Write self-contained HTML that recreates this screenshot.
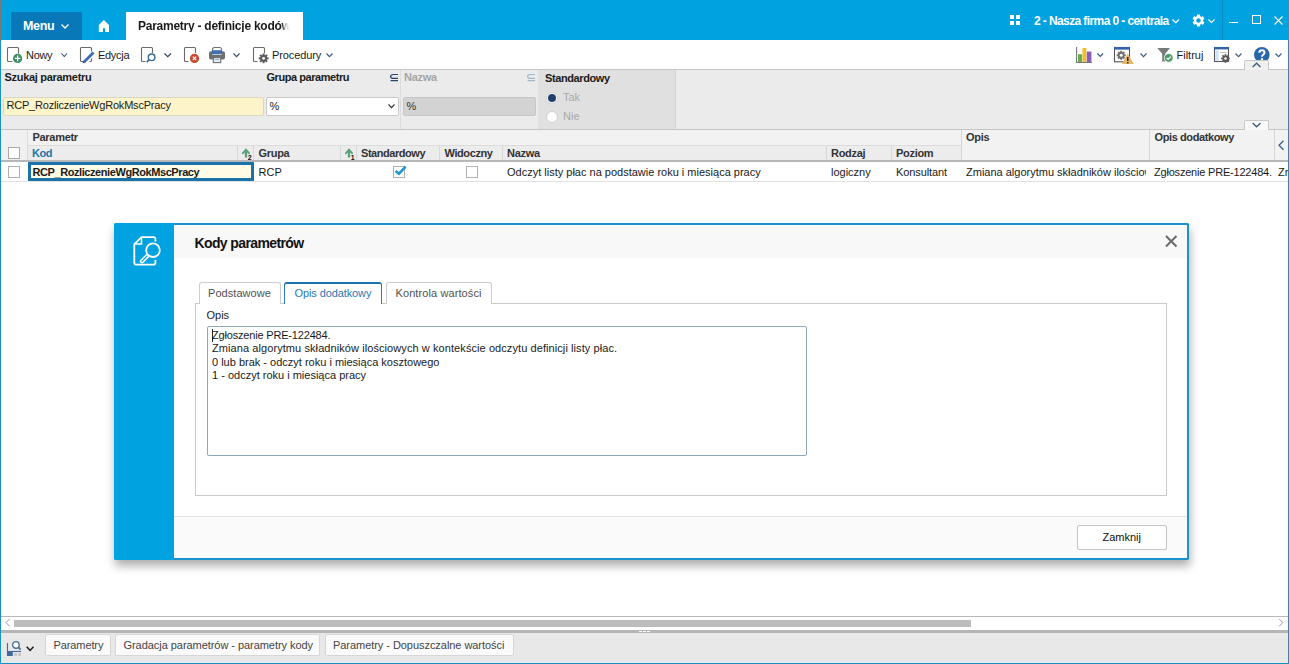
<!DOCTYPE html>
<html><head><meta charset="utf-8">
<style>
*{box-sizing:border-box;margin:0;padding:0}
html,body{width:1289px;height:664px;overflow:hidden;background:#fff;font-family:"Liberation Sans",sans-serif;font-size:11px;color:#1a1a1a}
.a{position:absolute}
.t{position:absolute;white-space:nowrap;line-height:1}
.b{font-weight:700}
svg{position:absolute;overflow:visible}
</style></head>
<body>
<!-- TOP BAR -->
<div class="a" style="left:0;top:0;width:1289px;height:40px;background:#00a3e0"></div>
<div class="a" style="left:0;top:0;width:1px;height:40px;background:#7a7a7a"></div>
<div class="a" style="left:11px;top:12px;width:71px;height:28px;background:#0878b9"></div>
<div class="t b" style="left:23px;top:20px;font-size:12.5px;color:#fff;letter-spacing:-0.3px">Menu</div>
<svg style="left:61px;top:24px" width="8" height="5"><path d="M0.5 0.5 L4 4 L7.5 0.5" fill="none" stroke="#fff" stroke-width="1.3"/></svg>
<svg style="left:98px;top:19px" width="13" height="14"><path d="M0.8 6 L5.9 0.9 L11 6 V13 H7.1 V9.2 H4.9 V13 H0.8 Z" fill="#fff"/></svg>
<div class="a" style="left:126px;top:12px;width:177px;height:28px;background:#fff"></div>
<div class="t b" style="left:138px;top:20px;font-size:12px;color:#1a1a1a;letter-spacing:-0.25px;width:152px;overflow:hidden;-webkit-mask-image:linear-gradient(to right,#000 0,#000 144px,rgba(0,0,0,0.35) 147px,transparent 152px)">Parametry - definicje kodów</div>

<!-- right of top bar -->
<svg style="left:1010px;top:15px" width="10" height="10"><rect x="0" y="0" width="4" height="4" fill="#fff"/><rect x="6" y="0" width="4" height="4" fill="#fff"/><rect x="0" y="6" width="4" height="4" fill="#fff"/><rect x="6" y="6" width="4" height="4" fill="#fff"/></svg>
<div class="t b" style="left:1034px;top:15px;font-size:12px;color:#fff;letter-spacing:-0.6px">2 - Nasza firma 0 - centrala</div>
<svg style="left:1172px;top:19px" width="8" height="5"><path d="M0.5 0.5 L3.75 3.75 L7 0.5" fill="none" stroke="#fff" stroke-width="1.1"/></svg>
<svg style="left:1190.5px;top:12.5px" width="15" height="15" viewBox="0 0 24 24"><path fill="#fff" d="M19.14 12.94c.04-.3.06-.61.06-.94 0-.32-.02-.64-.07-.94l2.03-1.58a.49.49 0 0 0 .12-.61l-1.92-3.32a.488.488 0 0 0-.59-.22l-2.39.96c-.5-.38-1.03-.7-1.62-.94l-.36-2.54a.484.484 0 0 0-.48-.41h-3.84c-.24 0-.43.17-.47.41l-.36 2.54c-.59.24-1.13.57-1.62.94l-2.39-.96c-.22-.08-.47 0-.59.22L2.74 8.87c-.12.21-.08.47.12.61l2.03 1.58c-.05.3-.09.63-.09.94s.02.64.07.94l-2.03 1.58a.49.49 0 0 0-.12.61l1.92 3.32c.12.22.37.29.59.22l2.39-.96c.5.38 1.03.7 1.62.94l.36 2.54c.05.24.24.41.48.41h3.84c.24 0 .44-.17.47-.41l.36-2.54c.59-.24 1.13-.56 1.62-.94l2.39.96c.22.08.47 0 .59-.22l1.92-3.32c.12-.22.07-.47-.12-.61l-2.01-1.58zM12 15.6c-1.98 0-3.6-1.62-3.6-3.6s1.62-3.6 3.6-3.6 3.6 1.62 3.6 3.6-1.62 3.6-3.6 3.6z"/></svg>
<svg style="left:1208px;top:19px" width="7" height="5"><path d="M0.5 0.5 L3.5 3.5 L6.5 0.5" fill="none" stroke="#fff" stroke-width="1.1"/></svg>
<div class="a" style="left:1222px;top:0;width:1px;height:40px;background:#0b8cc4"></div>
<div class="a" style="left:1229px;top:22px;width:9px;height:1px;background:#fff"></div>
<div class="a" style="left:1252px;top:15px;width:9px;height:9px;border:1px solid #fff"></div>
<svg style="left:1274px;top:16px" width="9" height="9"><path d="M0.5 0.5 L8.5 8.5 M8.5 0.5 L0.5 8.5" stroke="#fff" stroke-width="1.1"/></svg>

<!-- frame borders -->
<div class="a" style="left:0;top:40px;width:1px;height:624px;background:#1592c8;z-index:5"></div>
<div class="a" style="left:1288px;top:40px;width:1px;height:624px;background:#1592c8;z-index:5"></div>

<!-- TOOLBAR -->
<svg style="left:7px;top:47px" width="16" height="17"><path d="M5.5 14.5 H1.5 Q0.5 14.5 0.5 13.5 V1.5 Q0.5 0.5 1.5 0.5 H10.5 Q11.5 0.5 11.5 1.5 V6.5" fill="none" stroke="#6a6a6a" stroke-width="1.1"/><circle cx="10.6" cy="11.4" r="4.6" fill="#3f8f66"/><path d="M10.6 8.6 V14.2 M7.8 11.4 H13.4" stroke="#fff" stroke-width="1.3"/></svg>
<div class="t" style="left:26px;top:50px;letter-spacing:-0.3px">Nowy</div>
<svg style="left:61px;top:53px" width="7" height="5"><path d="M0.5 0.5 L3.25 3.5 L6 0.5" fill="none" stroke="#2f4a66" stroke-width="1.1"/></svg>
<svg style="left:80px;top:47px" width="16" height="17"><path d="M4.5 14.5 H1.5 Q0.5 14.5 0.5 13.5 V1.5 Q0.5 0.5 1.5 0.5 H10.5 Q11.5 0.5 11.5 1.5 V4.5 M11.5 11.5 V13.5 Q11.5 14.5 10.5 14.5 H9.5" fill="none" stroke="#6a6a6a" stroke-width="1.1"/><path d="M13.5 5.5 L3.8 15.2" stroke="#3b6fb3" stroke-width="2.8"/><path d="M3.2 14 L2.6 16.3 L4.9 15.7 Z" fill="#2d4f7a"/></svg>
<div class="t" style="left:98px;top:50px;letter-spacing:-0.3px">Edycja</div>
<svg style="left:141px;top:47px" width="16" height="17"><path d="M4.5 14.5 H1.5 Q0.5 14.5 0.5 13.5 V1.5 Q0.5 0.5 1.5 0.5 H10.5 Q11.5 0.5 11.5 1.5 V6" fill="none" stroke="#6a6a6a" stroke-width="1.1"/><circle cx="10.6" cy="10.3" r="3.3" fill="#fff" stroke="#3d6a98" stroke-width="1.4"/><path d="M8.2 12.7 L5.8 15.1" stroke="#3d6a98" stroke-width="1.8"/></svg>
<svg style="left:164px;top:53px" width="8" height="5"><path d="M0.5 0.5 L3.75 3.7 L7 0.5" fill="none" stroke="#2f3f55" stroke-width="1.1"/></svg>
<svg style="left:184px;top:47px" width="16" height="17"><path d="M4.5 14.5 H1.5 Q0.5 14.5 0.5 13.5 V1.5 Q0.5 0.5 1.5 0.5 H10.5 Q11.5 0.5 11.5 1.5 V6" fill="none" stroke="#6a6a6a" stroke-width="1.1"/><circle cx="10.5" cy="11.4" r="4.6" fill="#c4482f"/><path d="M8.8 9.7 L12.2 13.1 M12.2 9.7 L8.8 13.1" stroke="#fff" stroke-width="1.2"/></svg>
<svg style="left:209px;top:47px" width="17" height="17"><rect x="3.5" y="0.5" width="9" height="6" rx="2" fill="#fff" stroke="#6e6e6e" stroke-width="1.1"/><rect x="0" y="4.2" width="16" height="8.3" rx="2" fill="#6e6e6e"/><rect x="3.2" y="3.2" width="9.6" height="3.8" fill="#3e72b3"/><rect x="3.2" y="7" width="9.6" height="1" fill="#b9cde3"/><rect x="4.3" y="10.6" width="7.4" height="5" fill="#e2eef7" stroke="#6e6e6e" stroke-width="1.1"/><path d="M6 12.6 H10" stroke="#7fa6c9" stroke-width="0.9"/></svg>
<svg style="left:233px;top:53px" width="8" height="5"><path d="M0.5 0.5 L3.5 3.6 L6.5 0.5" fill="none" stroke="#2f4a66" stroke-width="1.1"/></svg>
<svg style="left:253px;top:47px" width="17" height="17"><path d="M4.5 14.5 H1.5 Q0.5 14.5 0.5 13.5 V1.5 Q0.5 0.5 1.5 0.5 H10.5 Q11.5 0.5 11.5 1.5 V6" fill="none" stroke="#6a6a6a" stroke-width="1.1"/><g transform="translate(10.6 11.3)"><path d="M-1 -4.8 H1 L1.3 -3.3 L2.6 -2.8 L3.9 -3.7 L5.2 -2.3 L4.2 -1.1 L4.6 0.2 L-0 0.2Z" fill="none"/><circle r="3.4" fill="#5b5b5b"/><g fill="#5b5b5b"><rect x="-1" y="-4.9" width="2" height="9.8"/><rect x="-4.9" y="-1" width="9.8" height="2"/><rect x="-1" y="-4.9" width="2" height="9.8" transform="rotate(45)"/><rect x="-1" y="-4.9" width="2" height="9.8" transform="rotate(-45)"/></g><circle r="1.4" fill="#fff"/></g></svg>
<div class="t" style="left:272px;top:50px;letter-spacing:-0.1px">Procedury</div>
<svg style="left:326px;top:53px" width="8" height="5"><path d="M0.5 0.5 L3.5 3.6 L6.5 0.5" fill="none" stroke="#3a5a7a" stroke-width="1.1"/></svg>

<!-- toolbar right -->
<svg style="left:1076px;top:47px" width="17" height="16"><path d="M0.6 0 V15.4 H16" fill="none" stroke="#777" stroke-width="1.1"/><rect x="2" y="7.2" width="4" height="7.7" fill="#6aaa4e"/><rect x="6.4" y="1" width="4" height="13.9" fill="#f2be2e"/><rect x="10.8" y="4.6" width="4.6" height="10.3" fill="#8a5bbf"/></svg>
<svg style="left:1097px;top:53px" width="8" height="5"><path d="M0.5 0.5 L3.3 3.5 L6.1 0.5" fill="none" stroke="#3a5a7a" stroke-width="1.1"/></svg>
<svg style="left:1114px;top:47px" width="21" height="18"><rect x="0.5" y="0.5" width="15" height="14.3" fill="#fff" stroke="#555" stroke-width="1.1"/><rect x="0" y="0" width="16" height="2.6" fill="#2f64a8"/><g transform="translate(7.2 8.3)"><circle r="3.2" fill="#6e6e6e"/><g fill="#6e6e6e"><rect x="-1" y="-4.5" width="2" height="9"/><rect x="-4.5" y="-1" width="9" height="2"/><rect x="-1" y="-4.5" width="2" height="9" transform="rotate(45)"/><rect x="-1" y="-4.5" width="2" height="9" transform="rotate(-45)"/></g><circle r="1.5" fill="#fff"/></g><path d="M13.8 6.6 L19.8 16.9 H7.8 Z" fill="#e6b866"/><path d="M13.8 10 V14 M13.8 15 V16.4" stroke="#1a1a1a" stroke-width="1.4"/></svg>
<svg style="left:1140px;top:53px" width="8" height="5"><path d="M0.5 0.5 L3.5 3.6 L6.5 0.5" fill="none" stroke="#3a5a7a" stroke-width="1.1"/></svg>
<svg style="left:1157px;top:48px" width="17" height="15"><path d="M0.3 0 H13 L8.2 5.8 V13.6 L5.2 13.6 V5.8 Z" fill="#7a7a7a"/><circle cx="11.7" cy="9.9" r="4.4" fill="#4e9a6a" stroke="#fff" stroke-width="0.8"/><path d="M9.6 9.9 L11.1 11.4 L13.9 8.6" fill="none" stroke="#fff" stroke-width="1.2"/></svg>
<div class="t" style="left:1176.5px;top:50px;letter-spacing:0px">Filtruj</div>
<svg style="left:1214px;top:47px" width="17" height="17"><rect x="0.5" y="0.5" width="14" height="14" fill="#fff" stroke="#555" stroke-width="1.1"/><rect x="0" y="0" width="15" height="2.4" fill="#3561a0"/><rect x="1.4" y="3.4" width="3.2" height="10.2" fill="#cde3f5"/><path d="M6 5.5 H13" stroke="#bbb" stroke-width="0.8"/><g transform="translate(11.5 11.5)"><circle r="3.1" fill="#5a5a5a"/><g fill="#5a5a5a"><rect x="-0.9" y="-4.3" width="1.8" height="8.6"/><rect x="-4.3" y="-0.9" width="8.6" height="1.8"/><rect x="-0.9" y="-4.3" width="1.8" height="8.6" transform="rotate(45)"/><rect x="-0.9" y="-4.3" width="1.8" height="8.6" transform="rotate(-45)"/></g><circle r="1.2" fill="#fff"/></g></svg>
<svg style="left:1235px;top:53px" width="8" height="5"><path d="M0.5 0.5 L3.5 3.6 L6.5 0.5" fill="none" stroke="#3a5a7a" stroke-width="1.1"/></svg>
<svg style="left:1254px;top:47px" width="16" height="16"><circle cx="7.8" cy="7.8" r="7.8" fill="#2a67a8"/><path d="M5.3 5.8 Q5.3 3.2 7.9 3.2 Q10.5 3.2 10.5 5.6 Q10.5 7 9 7.9 Q8 8.5 8 9.8" fill="none" stroke="#fff" stroke-width="2"/><rect x="6.9" y="11.2" width="2.2" height="2.2" fill="#fff"/></svg>
<svg style="left:1275px;top:53px" width="8" height="5"><path d="M0.5 0.5 L3.5 3.6 L6.5 0.5" fill="none" stroke="#3a5a7a" stroke-width="1.1"/></svg>
<div class="a" style="left:1244px;top:60px;width:25px;height:10px;background:#f0f0f0;border:1px solid #c8c8c8;border-bottom:none;border-radius:2px 2px 0 0;z-index:3"></div>
<svg style="left:1252px;top:62px;z-index:4" width="10" height="6"><path d="M0.7 5 L4.6 1.2 L8.5 5" fill="none" stroke="#3a5a7a" stroke-width="1.3"/></svg>

<div class="a" style="left:0;top:69px;width:1289px;height:1px;background:#c6c6c6"></div>

<!-- FILTER PANEL -->
<div class="a" style="left:0;top:70px;width:1289px;height:59px;background:#ebebeb"></div>
<div class="a" style="left:0;top:129px;width:1289px;height:1px;background:#c4c4c4"></div>
<div class="t b" style="left:4.5px;top:72px;letter-spacing:-0.3px">Szukaj parametru</div>
<div class="a" style="left:3px;top:97px;width:261px;height:19px;background:#fdf5c9;border:1px solid #d9d6c4;border-radius:2px"></div>
<div class="t" style="left:6.5px;top:100px;letter-spacing:-0.2px">RCP_RozliczenieWgRokMscPracy</div>
<div class="t b" style="left:266.5px;top:72px;letter-spacing:-0.45px">Grupa parametru</div>
<svg style="left:390px;top:73px" width="9" height="9"><path d="M8 1.5 H3.6 Q0.6 1.5 0.6 3.45 Q0.6 5.4 3.6 5.4 H8 M0.6 7.6 H8" fill="none" stroke="#24456e" stroke-width="1.2"/></svg>
<div class="a" style="left:266px;top:97px;width:133px;height:19px;background:#fff;border:1px solid #c9c9c9;border-radius:2px"></div>
<div class="t" style="left:269.5px;top:101px">%</div>
<svg style="left:388px;top:104px" width="8" height="5"><path d="M0.5 0.5 L3.5 3.6 L6.5 0.5" fill="none" stroke="#333" stroke-width="1.2"/></svg>
<div class="a" style="left:400px;top:70px;width:1px;height:59px;background:#dcdcdc"></div>
<div class="t b" style="left:404px;top:72px;letter-spacing:-0.3px;color:#a6a6a6">Nazwa</div>
<svg style="left:527px;top:73px" width="9" height="9"><path d="M8 1.5 H3.6 Q0.6 1.5 0.6 3.45 Q0.6 5.4 3.6 5.4 H8 M0.6 7.6 H8" fill="none" stroke="#a4b8cc" stroke-width="1.2"/></svg>
<div class="a" style="left:403px;top:97px;width:133px;height:19px;background:#d3d3d3;border:1px solid #c6c6c6;border-radius:2px"></div>
<div class="t" style="left:406.5px;top:101px;color:#333">%</div>
<div class="a" style="left:538px;top:70px;width:138px;height:59px;background:#e0e0e0;border-right:1px solid #d6d6d6"></div>
<div class="t b" style="left:545px;top:73px;letter-spacing:-0.4px">Standardowy</div>
<div class="a" style="left:545.5px;top:91.5px;width:12px;height:12px;border-radius:50%;background:#fff;border:1px solid #cfcfcf"></div>
<div class="a" style="left:547.5px;top:93.5px;width:8px;height:8px;border-radius:50%;background:#1f3f6c"></div>
<div class="t" style="left:563px;top:92px;color:#a9a9a9">Tak</div>
<div class="a" style="left:545.5px;top:110.5px;width:12px;height:12px;border-radius:50%;background:#fff;border:1px solid #cfcfcf"></div>
<div class="t" style="left:563px;top:111px;color:#a9a9a9">Nie</div>
<div class="a" style="left:1244px;top:120px;width:25px;height:10px;background:#f9f9f9;border:1px solid #c8c8c8;border-bottom:none;border-radius:2px 2px 0 0;z-index:3"></div>
<svg style="left:1252px;top:122px;z-index:4" width="10" height="6"><path d="M0.7 1 L4.6 4.8 L8.5 1" fill="none" stroke="#3a5a7a" stroke-width="1.3"/></svg>

<!-- GRID -->
<div class="a" style="left:1px;top:130px;width:1287px;height:15px;background:#f2f2f2"></div>
<div class="a" style="left:1px;top:146px;width:960px;height:14px;background:#ececec"></div>
<div class="a" style="left:1px;top:130px;width:26px;height:30px;background:#f0f0f0"></div>
<div class="a" style="left:961px;top:130px;width:327px;height:30px;background:#f2f2f2"></div>
<div class="a" style="left:27px;top:145px;width:934px;height:1px;background:#dcdcdc"></div>
<div class="a" style="left:0;top:160px;width:1289px;height:2px;background:#b7b7b7"></div>
<div class="a" style="left:27px;top:130px;width:1px;height:30px;background:#dadada"></div>
<div class="a" style="left:961px;top:130px;width:1px;height:30px;background:#d6d6d6"></div>
<div class="a" style="left:1149px;top:130px;width:1px;height:30px;background:#d6d6d6"></div>
<div class="a" style="left:1274px;top:130px;width:1px;height:30px;background:#d6d6d6"></div>
<div class="a" style="left:237px;top:146px;width:1px;height:14px;background:#d8d8d8"></div>
<div class="a" style="left:253px;top:146px;width:1px;height:14px;background:#d8d8d8"></div>
<div class="a" style="left:340px;top:146px;width:1px;height:14px;background:#d8d8d8"></div>
<div class="a" style="left:356px;top:146px;width:1px;height:14px;background:#d8d8d8"></div>
<div class="a" style="left:439px;top:146px;width:1px;height:14px;background:#d8d8d8"></div>
<div class="a" style="left:502px;top:146px;width:1px;height:14px;background:#d8d8d8"></div>
<div class="a" style="left:826px;top:146px;width:1px;height:14px;background:#d8d8d8"></div>
<div class="a" style="left:891px;top:146px;width:1px;height:14px;background:#d8d8d8"></div>
<div class="a" style="left:8px;top:147px;width:12px;height:12px;background:#fff;border:1px solid #a9a9a9"></div>
<div class="t b" style="left:32.5px;top:132px;color:#333;letter-spacing:-0.3px">Parametr</div>
<div class="t b" style="left:32px;top:148px;color:#1b76aa;letter-spacing:-0.5px">Kod</div>
<svg style="left:242px;top:148px" width="12" height="13"><path d="M4 9.5 V2.5" stroke="#5aa27a" stroke-width="2.3"/><path d="M1 5.2 L4 1.8 L7 5.2" fill="none" stroke="#5aa27a" stroke-width="2" stroke-linecap="round"/><text x="5.8" y="11.8" font-family="Liberation Sans" font-size="7" font-weight="700" fill="#111">2</text></svg><svg style="left:345px;top:148px" width="12" height="13"><path d="M4 9.5 V2.5" stroke="#5aa27a" stroke-width="2.3"/><path d="M1 5.2 L4 1.8 L7 5.2" fill="none" stroke="#5aa27a" stroke-width="2" stroke-linecap="round"/><text x="5.8" y="11.8" font-family="Liberation Sans" font-size="7" font-weight="700" fill="#111">1</text></svg>
<div class="t b" style="left:258.5px;top:148px;color:#333;letter-spacing:-0.3px">Grupa</div>
<div class="t b" style="left:361px;top:148px;color:#333;letter-spacing:-0.45px">Standardowy</div>
<div class="t b" style="left:444.5px;top:148px;color:#333;letter-spacing:-0.4px">Widoczny</div>
<div class="t b" style="left:507px;top:148px;color:#333;letter-spacing:-0.3px">Nazwa</div>
<div class="t b" style="left:831px;top:148px;color:#333;letter-spacing:-0.3px">Rodzaj</div>
<div class="t b" style="left:896px;top:148px;color:#333;letter-spacing:-0.3px">Poziom</div>
<div class="t b" style="left:966px;top:131.5px;color:#333;letter-spacing:-0.3px">Opis</div>
<div class="t b" style="left:1154.5px;top:131.5px;color:#333;letter-spacing:-0.4px">Opis dodatkowy</div>
<svg style="left:1278px;top:140px" width="7" height="11"><path d="M5.5 0.7 L1 5.2 L5.5 9.7" fill="none" stroke="#3a5f8a" stroke-width="1.3"/></svg>
<!-- row -->
<div class="a" style="left:1px;top:181px;width:1287px;height:1px;background:#e2e2e2"></div>
<div class="a" style="left:8px;top:166px;width:12px;height:12px;background:#fff;border:1px solid #b0b0b0"></div>
<div class="a" style="left:28px;top:162px;width:226px;height:19px;background:#fffbe4;border:3px solid #1a72aa"></div>
<div class="t b" style="left:32.5px;top:167px;letter-spacing:-0.42px">RCP_RozliczenieWgRokMscPracy</div>
<div class="t" style="left:258.5px;top:167px">RCP</div>
<div class="a" style="left:393px;top:166px;width:12px;height:12px;background:#fff;border:1px solid #b0b0b0"></div>
<svg style="left:394px;top:165px" width="13" height="11"><path d="M1.6 6 L4.9 8.8 L11.6 1.6" fill="none" stroke="#1e94d2" stroke-width="2.6"/></svg>
<div class="a" style="left:466px;top:166px;width:12px;height:12px;background:#fff;border:1px solid #b0b0b0"></div>
<div class="t" style="left:507px;top:167px">Odczyt listy płac na podstawie roku i miesiąca pracy</div>
<div class="t" style="left:831px;top:167px">logiczny</div>
<div class="t" style="left:896px;top:167px;letter-spacing:-0.1px">Konsultant</div>
<div class="a" style="left:966px;top:160px;width:180px;height:22px;overflow:hidden"><div class="t" style="left:0;top:7px">Zmiana algorytmu składników ilościowych</div></div>
<div class="t" style="left:1154px;top:167px;letter-spacing:-0.2px">Zgłoszenie PRE-122484.</div><div class="a" style="left:1278px;top:160px;width:10px;height:22px;overflow:hidden"><div class="t" style="left:0;top:7px">Zmiana</div></div>


<!-- DIALOG -->
<div class="a" style="left:114px;top:223px;width:1075px;height:337px;background:#fff;border-radius:2px;box-shadow:1px 6px 10px rgba(0,0,0,0.32);z-index:10;overflow:hidden">
 <div class="a" style="left:0;top:0;width:1075px;height:2px;background:#1a93cc"></div>
 <div class="a" style="left:1073px;top:0;width:2px;height:337px;background:#1a93cc"></div>
 <div class="a" style="left:0;top:335px;width:1075px;height:2px;background:#1a93cc"></div>
 <div class="a" style="left:0;top:0;width:60px;height:337px;background:#00a3e0"></div>
 <div class="a" style="left:60px;top:2px;width:1013px;height:33px;background:#f8f8f8"></div>
 <div class="a" style="left:60px;top:293px;width:1013px;height:1px;background:#e3e3e3"></div>
 <div class="a" style="left:60px;top:294px;width:1013px;height:41px;background:#fafafa"></div>
</div>
<div style="position:absolute;left:0;top:0;width:1289px;height:664px;z-index:11">
<svg style="left:132px;top:235px" width="32" height="32"><path d="M23.4 6.6 V4 Q23.4 2.1 21.5 2.1 H9.6 L2.3 9.2 V27.7 Q2.3 29.6 4.2 29.6 H21.5 Q23.4 29.6 23.4 27.7 V25.1" fill="none" stroke="#fff" stroke-width="1.8" stroke-linejoin="round"/><path d="M3.2 9.1 H9.5 V2.8" fill="none" stroke="#fff" stroke-width="1.5"/><circle cx="21" cy="15.2" r="6.8" fill="none" stroke="#fff" stroke-width="1.8"/><path d="M15 21.2 L10 26.2" stroke="#fff" stroke-width="4.4" stroke-linecap="round"/><path d="M15 21.2 L10 26.2" stroke="#00a3e0" stroke-width="1.2" stroke-linecap="round"/></svg>
<div class="t b" style="left:194.5px;top:235.5px;font-size:14px;color:#111;letter-spacing:-0.62px">Kody parametrów</div>
<svg style="left:1165px;top:235px" width="13" height="13"><path d="M1 1 L11.5 11.5 M11.5 1 L1 11.5" stroke="#6a6a6a" stroke-width="2"/></svg>
<div class="a" style="left:194.5px;top:303px;width:972px;height:193px;border:1px solid #cacaca"></div>
<div class="a" style="left:198.5px;top:282px;width:82px;height:22px;background:#fff;border:1px solid #cdcdcd;border-bottom:none;border-radius:3px 3px 0 0"></div>
<div class="t" style="left:208px;top:287.5px;color:#505050;letter-spacing:0.05px">Podstawowe</div>
<div class="a" style="left:284px;top:282px;width:98px;height:22px;background:#fff;border:1px solid #2b7ab5;border-top:2px solid #1a73b0;border-bottom:none;border-radius:3px 3px 0 0"></div>
<div class="t" style="left:294.5px;top:288px;color:#2878b5;letter-spacing:-0.1px">Opis dodatkowy</div>
<div class="a" style="left:386px;top:282px;width:105.5px;height:22px;background:#fff;border:1px solid #cdcdcd;border-bottom:none;border-radius:3px 3px 0 0"></div>
<div class="t" style="left:395.5px;top:287.5px;color:#505050;letter-spacing:0.1px">Kontrola wartości</div>
<div class="t" style="left:206.5px;top:309.5px;color:#222">Opis</div>
<div class="a" style="left:207px;top:326px;width:600px;height:130px;border:1px solid #8fa7bb;border-radius:2px;background:#fff"></div>
<div class="a" style="left:211.5px;top:329px;width:1px;height:13px;background:#222"></div>
<div class="t" style="left:212px;top:329.5px;color:#1a1a1a;letter-spacing:-0.18px">Zgłoszenie PRE-122484.</div>
<div class="t" style="left:212px;top:343px;color:#1a1a1a;letter-spacing:0.08px">Zmiana algorytmu składników ilościowych w kontekście odczytu definicji listy płac.</div>
<div class="t" style="left:212px;top:356.5px;color:#1a1a1a;letter-spacing:0px">0 lub brak - odczyt roku i miesiąca kosztowego</div>
<div class="t" style="left:212px;top:369.8px;color:#1a1a1a;letter-spacing:0px">1 - odczyt roku i miesiąca pracy</div>
<div class="a" style="left:1077px;top:525px;width:90px;height:25px;background:#fff;border:1px solid #c6c6c6;border-radius:2px"></div>
<div class="t" style="left:1102.5px;top:531.5px;color:#111">Zamknij</div>
</div>


<!-- BOTTOM -->
<div class="a" style="left:0;top:616px;width:1289px;height:1px;background:#b9b9b9"></div>
<svg style="left:5px;top:618px" width="6" height="10"><path d="M4.8 0.8 L1 4.6 L4.8 8.4" fill="none" stroke="#9a9a9a" stroke-width="1"/></svg>
<svg style="left:1278px;top:618px" width="6" height="10"><path d="M1 0.8 L4.8 4.6 L1 8.4" fill="none" stroke="#9a9a9a" stroke-width="1"/></svg>
<div class="a" style="left:14px;top:620px;width:957px;height:7px;background:#bcbcbc"></div>
<div class="a" style="left:0;top:630px;width:1289px;height:3px;background:#b5b5b5"></div>
<div class="a" style="left:639px;top:631px;width:3px;height:1px;background:#fff"></div>
<div class="a" style="left:643px;top:631px;width:3px;height:1px;background:#fff"></div>
<div class="a" style="left:647px;top:631px;width:3px;height:1px;background:#fff"></div>
<div class="a" style="left:0;top:633px;width:1289px;height:30px;background:#e8e8e8"></div>
<div class="a" style="left:0;top:663px;width:1289px;height:1px;background:#1592c8;z-index:6"></div>
<svg style="left:7px;top:640px" width="16" height="17"><path d="M0.5 3 V15.5" stroke="#3d6a9a" stroke-width="1.1"/><path d="M0 11.5 H14" stroke="#3d6a9a" stroke-width="1.1"/><rect x="0" y="11" width="5.8" height="5" fill="#3d6aa0"/><rect x="7.3" y="13.2" width="2.6" height="2.7" fill="#c2c2c2"/><rect x="11.2" y="13.2" width="2.7" height="2.7" fill="#c2c2c2"/><circle cx="8.9" cy="4.9" r="3.3" fill="#fff" stroke="#4a7090" stroke-width="1.4"/><path d="M11.2 7.2 L13.6 9.6" stroke="#4a7090" stroke-width="1.8"/></svg>
<svg style="left:26px;top:646px" width="9" height="6"><path d="M0.7 0.7 L4.1 4.4 L7.5 0.7" fill="none" stroke="#1a1a1a" stroke-width="1.5"/></svg>
<div class="a" style="left:45px;top:633.5px;width:66px;height:22px;background:#fafafa;border:1px solid #d6d6d6;border-radius:2px"></div>
<div class="t" style="left:53.5px;top:639.5px;color:#444;letter-spacing:-0.1px">Parametry</div>
<div class="a" style="left:115px;top:633.5px;width:205px;height:22px;background:#fafafa;border:1px solid #d6d6d6;border-radius:2px"></div>
<div class="t" style="left:123.5px;top:639.5px;color:#444;letter-spacing:-0.05px">Gradacja parametrów - parametry kody</div>
<div class="a" style="left:324.5px;top:633.5px;width:189px;height:22px;background:#fafafa;border:1px solid #d6d6d6;border-radius:2px"></div>
<div class="t" style="left:333px;top:639.5px;color:#444;letter-spacing:-0.05px">Parametry - Dopuszczalne wartości</div>
</body></html>
